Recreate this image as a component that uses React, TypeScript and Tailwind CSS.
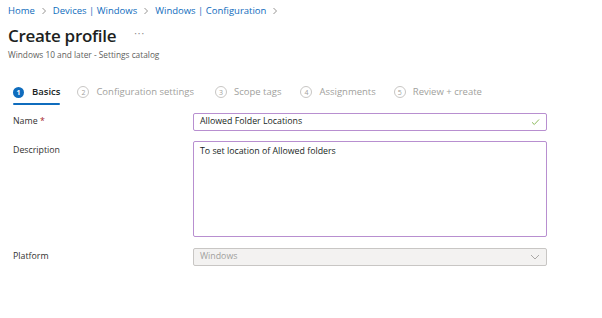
import React from "react";

function StepCircle({ n, active }: { n: number; active?: boolean }) {
  if (active) {
    return (
      <span className="flex h-[11px] w-[11px] items-center justify-center rounded-full bg-[#0f6cbd] text-[7px] font-bold leading-none text-white">
        {n}
      </span>
    );
  }
  return (
    <span className="flex h-[12px] w-[12px] items-center justify-center rounded-full border border-[#c8c6c4] text-[7px] leading-none text-[#a19f9d]">
      {n}
    </span>
  );
}

function Chevron() {
  return (
    <svg width="6" height="8" viewBox="0 0 6 8" className="mx-[6px]">
      <path d="M1.5 1 L4.5 4 L1.5 7" fill="none" stroke="#8a8886" strokeWidth="0.9" />
    </svg>
  );
}

export default function App() {
  const steps = [
    { n: 2, label: "Configuration settings", ml: "ml-[17px]" },
    { n: 3, label: "Scope tags", ml: "ml-[21px]" },
    { n: 4, label: "Assignments", ml: "ml-[19px]" },
    { n: 5, label: "Review + create", ml: "ml-[18px]" },
  ];
  return (
    <div
      className="h-[318px] w-[602px] overflow-hidden bg-white text-[#323130]"
      style={{ fontFamily: '"Open Sans", "Noto Sans", sans-serif' }}
    >
      <div className="px-[8px] pt-[4px]">
        <div className="flex items-center text-[9.5px] leading-[14px] text-[#0f6cbd]">
          <span>Home</span>
          <Chevron />
          <span>Devices | Windows</span>
          <Chevron />
          <span>Windows | Configuration</span>
          <Chevron />
        </div>
        <div className="mt-[6px] flex items-center">
          <span className="text-[17px] font-semibold leading-[24px] tracking-[-0.3px] text-[#201f1e]">
            Create profile
          </span>
          <span className="ml-[18px] mt-[-6px] text-[10px] tracking-[1px] text-[#8a8886]">···</span>
        </div>
        <div className="mt-[1px] text-[8.3px] leading-[11px] text-[#605e5c]">
          Windows 10 and later - Settings catalog
        </div>
      </div>

      <div className="mt-[25px] flex items-center pl-[13px]">
        <div className="relative flex items-center gap-[8px] pb-[4px]">
          <StepCircle n={1} active />
          <span className="text-[9.5px] font-semibold leading-[14px] text-[#201f1e]">Basics</span>
          <div className="absolute bottom-[-2px] left-0 right-0 h-[2px] rounded-full bg-[#0f6cbd]" />
        </div>
        {steps.map((s) => (
          <div key={s.n} className={`${s.ml} flex items-center gap-[7px] pb-[4px]`}>
            <StepCircle n={s.n} />
            <span className="text-[9.5px] leading-[14px] text-[#a19f9d]">{s.label}</span>
          </div>
        ))}
      </div>

      <div className="mt-[10px] flex flex-col pl-[13px] text-[8.8px]">
        <div className="flex items-center">
          <div className="w-[180px] text-[#323130]">
            Name <span className="text-[#a4262c]">*</span>
          </div>
          <div className="flex h-[18px] w-[354px] items-center justify-between rounded-[2px] border border-[#b88fd0] px-[6px]">
            <span className="text-[#201f1e]">Allowed Folder Locations</span>
            <svg width="9" height="8" viewBox="0 0 9 8">
              <path d="M1 4.3 L3.3 6.5 L8 1.5" fill="none" stroke="#7fb24a" strokeWidth="0.9" />
            </svg>
          </div>
        </div>
        <div className="mt-[10px] flex items-start">
          <div className="w-[180px] pt-[3px] text-[#323130]">Description</div>
          <div className="h-[96px] w-[354px] rounded-[2px] border border-[#b88fd0] px-[6px] pt-[3px] text-[#201f1e]">
            To set location of Allowed folders
          </div>
        </div>
        <div className="mt-[11px] flex items-center">
          <div className="w-[180px] text-[#323130]">Platform</div>
          <div className="flex h-[18px] w-[354px] items-center justify-between rounded-[2px] border border-[#c8c6c4] bg-[#f3f2f1] px-[6px]">
            <span className="text-[#a19f9d]">Windows</span>
            <svg width="10" height="6" viewBox="0 0 10 6">
              <path d="M1 1 L5 5 L9 1" fill="none" stroke="#a19f9d" strokeWidth="0.9" />
            </svg>
          </div>
        </div>
      </div>
    </div>
  );
}
